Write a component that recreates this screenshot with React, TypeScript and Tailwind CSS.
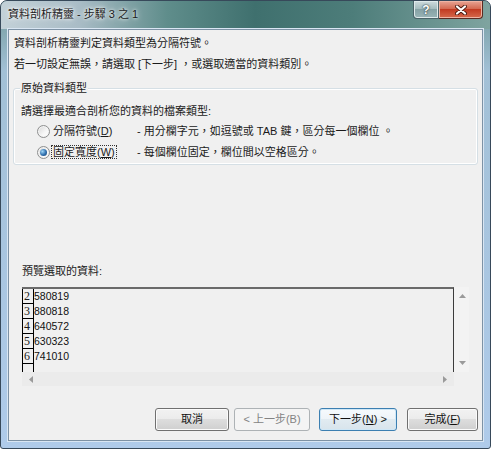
import React from "react";

function Radio({ checked }: { checked?: boolean }) {
  return (
    <span className="flex h-[13px] w-[13px] shrink-0 items-center justify-center rounded-full border border-[#8e8f8f] bg-[linear-gradient(135deg,#d6d6d6,#f7f7f7_60%,#ffffff)] shadow-[inset_0_0_0_1px_#f4f4f4]">
      {checked && (
        <span className="h-[7px] w-[7px] rounded-full bg-[radial-gradient(circle_at_35%_35%,#9fd6f7,#2f6fae_55%,#163f6d)]" />
      )}
    </span>
  );
}

function Btn({
  children,
  kind = "normal",
  className = "",
}: {
  children: React.ReactNode;
  kind?: "normal" | "disabled" | "default";
  className?: string;
}) {
  const look =
    kind === "disabled"
      ? "border-[#adb2b5] bg-[#f4f4f4] text-[#838383]"
      : kind === "default"
      ? "border-[#3c7fb1] bg-[linear-gradient(180deg,#f6fafd_0%,#eef4f8_50%,#e1ebf1_50%,#d8e4ec_100%)] text-[#111] shadow-[inset_0_0_0_1px_#cfe7f6]"
      : "border-[#707070] bg-[linear-gradient(180deg,#f2f2f2_0%,#ebebeb_50%,#dddddd_50%,#cfcfcf_100%)] text-[#111] shadow-[inset_0_0_0_1px_#fbfbfb]";
  return (
    <div
      className={`flex h-[23px] items-center justify-center rounded-[3px] border text-[11px] leading-none ${look} ${className}`}
    >
      {children}
    </div>
  );
}

const rows = [
  ["2", "580819"],
  ["3", "880818"],
  ["4", "640572"],
  ["5", "630323"],
  ["6", "741010"],
];

export default function App() {
  return (
    <div className="h-[449px] w-[491px] bg-white font-['Liberation_Sans','Noto_Sans_CJK_TC',sans-serif]">
      {/* WINDOW FRAME */}
      <div className="flex h-[449px] w-[491px] flex-col overflow-hidden rounded-t-[7px] rounded-b-[3px] border border-[#37495a] bg-[linear-gradient(180deg,#6f9898_0px,#a2c0d6_70px,#afcbea_100%)]">
        {/* TITLE BAR */}
        <div className="flex h-[28px] shrink-0 items-start justify-between bg-[linear-gradient(90deg,#c3d1d8_0%,#a9bcc6_16%,#5f8d8b_34%,#3f706e_52%,#4d7d7a_72%,#7fa4a0_100%)]">
          <span className="pl-[7px] pt-[5px] text-[11px] leading-[16px] text-[#1a1a1a] [text-shadow:0_0_6px_#ffffff,0_0_3px_#ffffff]">
            資料剖析精靈 - 步驟 3 之 1
          </span>
          <div className="mr-[7px] flex">
            <div className="flex h-[18px] w-[26px] items-center justify-center rounded-bl-[4px] border border-t-0 border-[#4a6469] bg-[linear-gradient(180deg,#cfdcde_0%,#a6bdbf_45%,#86a2a5_50%,#9ab5b7_100%)] shadow-[inset_0_0_0_1px_#dfeaeb]">
              <span className="text-[12px] font-bold leading-none text-white [text-shadow:0_0_1px_#2d3d40,0_0_2px_#2d3d40]">
                ?
              </span>
            </div>
            <div className="flex h-[18px] w-[44px] items-center justify-center rounded-br-[4px] border border-t-0 border-l-0 border-[#5a2b22] bg-[linear-gradient(180deg,#e8a595_0%,#d46a52_45%,#c23b22_50%,#d66a4c_100%)] shadow-[inset_0_0_0_1px_#efb3a3]">
              <svg width="12" height="10" viewBox="0 0 12 10">
                <path d="M2 1.5 L10 8.5 M10 1.5 L2 8.5" stroke="#4a1a10" strokeWidth="4" strokeLinecap="round" />
                <path d="M2 1.5 L10 8.5 M10 1.5 L2 8.5" stroke="#ffffff" strokeWidth="2.2" strokeLinecap="round" />
              </svg>
            </div>
          </div>
        </div>

        {/* CLIENT AREA */}
        <div className="mx-[7px] flex h-[412px] shrink-0 flex-col border border-[#7d92a5] bg-[#f0f0f0] text-[11px] leading-[16px] text-[#1a1a1a] shadow-[0_0_0_1px_#d9e6f3]">
          <p className="ml-[5px] mt-[5px]">資料剖析精靈判定資料類型為分隔符號。</p>
          <p className="ml-[5px] mt-[5px]">若一切設定無誤，請選取 [下一步] ，或選取適當的資料類別。</p>

          {/* GROUP */}
          <div className="relative mx-[4px] mt-[16px] rounded-[3px] border border-[#d5dfe5] pb-[4px] pt-[14px] shadow-[inset_0_0_0_1px_#ffffff]">
            <span className="absolute left-[6px] top-[-9px] bg-[#f0f0f0] px-[1px]">原始資料類型</span>
            <p className="ml-[7px]">請選擇最適合剖析您的資料的檔案類型:</p>
            <div className="mt-[4px] flex h-[16px] items-center pl-[23px]">
              <Radio />
              <span className="ml-[1px] w-[86px] shrink-0">
                <span className="border border-transparent px-[1px]">
                  分隔符號(<u>D</u>)
                </span>
              </span>
              <span>- 用分欄字元，如逗號或 TAB 鍵，區分每一個欄位 。</span>
            </div>
            <div className="mt-[5px] flex h-[16px] items-center pl-[23px]">
              <Radio checked />
              <span className="ml-[1px] w-[86px] shrink-0">
                <span className="border border-dotted border-[#333] px-[1px]">
                  固定寬度(<u>W</u>)
                </span>
              </span>
              <span>- 每個欄位固定，欄位間以空格區分。</span>
            </div>
          </div>

          <p className="ml-[13px] mt-[98px]">預覽選取的資料:</p>

          {/* PREVIEW */}
          <div className="ml-[13px] mt-[8px] grid h-[99px] w-[447px] grid-cols-[1fr_15px] grid-rows-[1fr_14px]">
            <div className="flex flex-col overflow-hidden border-r border-t-2 border-r-[#3c3c3c] border-t-[#6a6a6a] bg-[#f0f0f0]">
              {rows.map(([n, v]) => (
                <div key={n} className="flex h-[15px] shrink-0">
                  <span className="flex w-[12px] items-end border-x border-b border-black pl-[1px] font-['Liberation_Serif',serif] text-[12px] leading-[13px]">
                    {n}
                  </span>
                  <span className="text-[10.5px] leading-[15px] text-[#111]">{v}</span>
                </div>
              ))}
              <div className="flex flex-1">
                <span className="w-[12px] border-x border-black" />
              </div>
            </div>
            <div className="flex flex-col items-center justify-between bg-[#f3f3f3] py-[7px] pl-[1px]">
              <svg width="7" height="4" viewBox="0 0 7 4">
                <polygon points="3.5,0 7,4 0,4" fill="#9a9a9a" />
              </svg>
              <svg width="7" height="4" viewBox="0 0 7 4">
                <polygon points="0,0 7,0 3.5,4" fill="#9a9a9a" />
              </svg>
            </div>
            <div className="flex items-center justify-between bg-[#ebebeb] px-[7px]">
              <svg width="4" height="7" viewBox="0 0 4 7">
                <polygon points="4,0 4,7 0,3.5" fill="#9a9a9a" />
              </svg>
              <svg width="4" height="7" viewBox="0 0 4 7">
                <polygon points="0,0 4,3.5 0,7" fill="#9a9a9a" />
              </svg>
            </div>
            <div className="bg-[#f0f0f0]" />
          </div>

          {/* BUTTONS */}
          <div className="mt-[22px] flex pl-[146px]">
            <Btn className="w-[74px]">取消</Btn>
            <Btn kind="disabled" className="ml-[5px] w-[76px]">
              &lt; 上一步(B)
            </Btn>
            <Btn kind="default" className="ml-[9px] w-[78px]">
              下一步(<u>N</u>) &gt;
            </Btn>
            <Btn className="ml-[10px] w-[71px]">
              完成(<u>F</u>)
            </Btn>
          </div>
        </div>
      </div>
    </div>
  );
}
